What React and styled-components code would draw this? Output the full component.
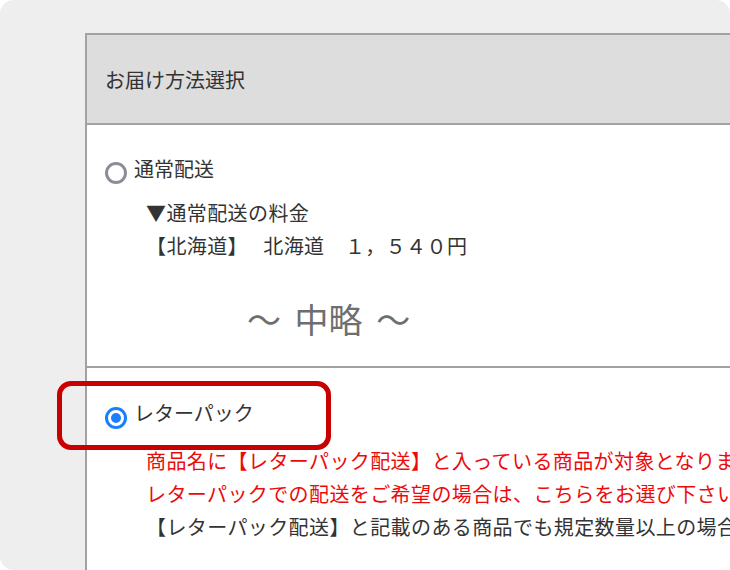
import React from 'react';
import styled, { createGlobalStyle } from 'styled-components';

const GlobalStyle = createGlobalStyle`
    html, body {
        margin: 0;
        padding: 0;
        background: #ffffff;
    }
    body {
        font-family: "Noto Sans CJK JP", "Noto Sans", sans-serif;
        color: #333333;
    }
`;

const options = [
    { id: 'normal', label: '通常配送', checked: false },
    { id: 'letterpack', label: 'レターパック', checked: true },
];

function App() {
    return (
        <>
            <GlobalStyle />
            <Frame>
                <Table>
                    <Header>お届け方法選択</Header>

                    <Section $pt={28} $pb={27}>
                        <OptionRow>
                            <Radio $checked={options[0].checked} />
                            {options[0].label}
                        </OptionRow>
                        <Detail $gap={13}>
                            <Line>▼通常配送の料金</Line>
                            <Line>【北海道】　 北海道　１，５４０円</Line>
                        </Detail>
                        <Omitted>～ 中略 ～</Omitted>
                    </Section>

                    <Section $pt={29} $pb={30} $last>
                        <OptionRow>
                            <Radio $checked={options[1].checked} />
                            {options[1].label}
                        </OptionRow>
                        <Detail $gap={17}>
                            <Line $red>商品名に【レターパック配送】と入っている商品が対象となります。</Line>
                            <Line $red>レターパックでの配送をご希望の場合は、こちらをお選び下さい。</Line>
                            <Line>【レターパック配送】と記載のある商品でも規定数量以上の場合は</Line>
                        </Detail>
                    </Section>
                </Table>

                <Highlight />
            </Frame>
        </>
    );
}

const Frame = styled.div`
    position: relative;
    width: 730px;
    height: 570px;
    box-sizing: border-box;
    padding: 33px 0 0 85px;
    background: #eeeeee;
    border-radius: 14px;
    overflow: hidden;
`;

const Table = styled.div`
    width: 760px;
    height: 600px;
    background: #ffffff;
    border: 2px solid #a2a2a2;
    border-right: none;
    display: flex;
    flex-direction: column;
`;

const Header = styled.div`
    height: 88px;
    flex-shrink: 0;
    display: flex;
    align-items: center;
    padding-left: 18px;
    background: #dddddd;
    border-bottom: 2px solid #a2a2a2;
    font-size: 20px;
    color: #333333;
`;

const Section = styled.div`
    padding: ${p => p.$pt}px 0 ${p => p.$pb}px 18px;
    border-bottom: ${p => (p.$last ? 'none' : '2px solid #a2a2a2')};
    flex-shrink: 0;
`;

const OptionRow = styled.label`
    display: flex;
    align-items: center;
    gap: 7px;
    height: 30px;
    font-size: 20px;
    color: #333333;
    white-space: nowrap;
`;

const Radio = styled.span`
    position: relative;
    width: 22px;
    height: 22px;
    margin-top: ${p => (p.$checked ? 12 : 10)}px;
    box-sizing: border-box;
    border-radius: 50%;
    border: 3px solid ${p => (p.$checked ? '#1a7ffb' : '#8c8c98')};
    flex-shrink: 0;

    &::after {
        content: '';
        display: ${p => (p.$checked ? 'block' : 'none')};
        position: absolute;
        top: 50%;
        left: 50%;
        width: 10px;
        height: 10px;
        border-radius: 50%;
        background: #1a7ffb;
        transform: translate(-50%, -50%);
    }
`;

const Detail = styled.div`
    margin-top: ${p => p.$gap || 10}px;
    padding-left: 41px;
`;

const Line = styled.div`
    font-size: 20px;
    line-height: 33px;
    letter-spacing: 0.4px;
    white-space: nowrap;
    color: ${p => (p.$red ? '#ec0a0a' : '#333333')};
`;

const Omitted = styled.div`
    margin-top: 37px;
    padding-left: 142px;
    font-size: 34px;
    line-height: 40px;
    word-spacing: 6px;
    color: #6e6e6e;
`;

const Highlight = styled.div`
    position: absolute;
    left: 57px;
    top: 381px;
    width: 274px;
    height: 69px;
    box-sizing: border-box;
    border: 5px solid #c80000;
    border-radius: 14px;
    pointer-events: none;
`;

export default App;
